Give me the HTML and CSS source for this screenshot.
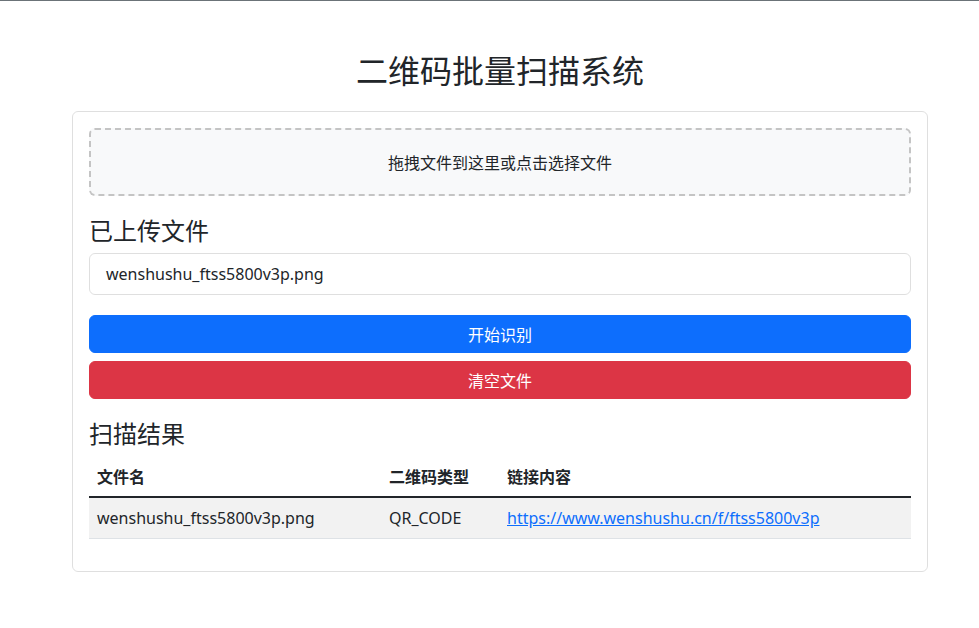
FILE: index.html
```html
<!DOCTYPE html>
<html lang="zh-CN">
<head>
<meta charset="utf-8">
<title>二维码批量扫描系统</title>
<link rel="stylesheet" href="styles.css">
</head>
<body>
<div class="page">
  <h1 class="title">二维码批量扫描系统</h1>
  <div class="card">
    <div class="dropzone">拖拽文件到这里或点击选择文件</div>
    <h4 class="section-title">已上传文件</h4>
    <ul class="file-list">
      <li class="file-item">wenshushu_ftss5800v3p.png</li>
    </ul>
    <div class="actions">
      <button class="btn btn-primary">开始识别</button>
      <button class="btn btn-danger">清空文件</button>
    </div>
    <h4 class="section-title">扫描结果</h4>
    <table class="results">
      <thead>
        <tr>
          <th class="col-name">文件名</th>
          <th class="col-type">二维码类型</th>
          <th>链接内容</th>
        </tr>
      </thead>
      <tbody>
        <tr>
          <td>wenshushu_ftss5800v3p.png</td>
          <td>QR_CODE</td>
          <td><a href="#">https://www.wenshushu.cn/f/ftss5800v3p</a></td>
        </tr>
      </tbody>
    </table>
  </div>
</div>
</body>
</html>
```

FILE: styles.css
```css
* { box-sizing: border-box; }
html, body { margin: 0; padding: 0; }
body {
  font-family: "Noto Sans", "Noto Sans CJK SC", sans-serif;
  font-size: 16px;
  line-height: 1.5;
  color: #212529;
  background: #fff;
  border-top: 1px solid #6b7378;
}
.page {
  width: 856px;
  margin-left: 72px;
}
.title {
  margin: 49px 0 23px;
  font-size: 32px;
  font-weight: 400;
  line-height: 1.2;
  text-align: center;
  font-family: "Noto Sans CJK SC", sans-serif;
}
.card {
  border: 1px solid rgba(0, 0, 0, 0.125);
  border-radius: 6px;
  padding: 16px;
}
.dropzone {
  border: 2px dashed #c4c4c4;
  border-radius: 6px;
  background: #f8f9fa;
  padding: 20px;
  text-align: center;
  font-size: 16px;
  line-height: 24px;
  font-family: "Noto Sans CJK SC", sans-serif;
}
.section-title {
  margin: 20px 0 8px;
  font-size: 24px;
  font-weight: 400;
  line-height: 1.2;
  font-family: "Noto Sans CJK SC", sans-serif;
}
.file-list {
  list-style: none;
  margin: 0;
  padding: 0;
}
.file-item {
  border: 1px solid rgba(0, 0, 0, 0.125);
  border-radius: 6px;
  padding: 8px 16px;
}
.actions {
  margin-top: 20px;
  display: flex;
  flex-direction: column;
  gap: 8px;
}
.btn {
  display: block;
  width: 100%;
  font-family: "Noto Sans CJK SC", sans-serif;
  font-size: 16px;
  line-height: 24px;
  padding: 6px 12px;
  border: 1px solid transparent;
  border-radius: 6px;
  color: #fff;
  text-align: center;
}
.btn-primary { background: #0d6efd; border-color: #0d6efd; }
.btn-danger { background: #dc3545; border-color: #dc3545; }
.results {
  width: 100%;
  border-collapse: collapse;
  margin-bottom: 16px;
}
.results th, .results td {
  padding: 8px;
  text-align: left;
  vertical-align: top;
}
.results th {
  font-weight: 700;
  font-family: "Noto Sans CJK SC", sans-serif;
  font-size: 16px;
  line-height: 24px;
  border-bottom: 2px solid #212529;
}
.col-name { width: 292px; }
.col-type { width: 118px; }
.results tbody tr { background: #f2f2f2; }
.results td { border-bottom: 1px solid #dee2e6; }
.results a { color: #0d6efd; text-decoration: underline; }
```
